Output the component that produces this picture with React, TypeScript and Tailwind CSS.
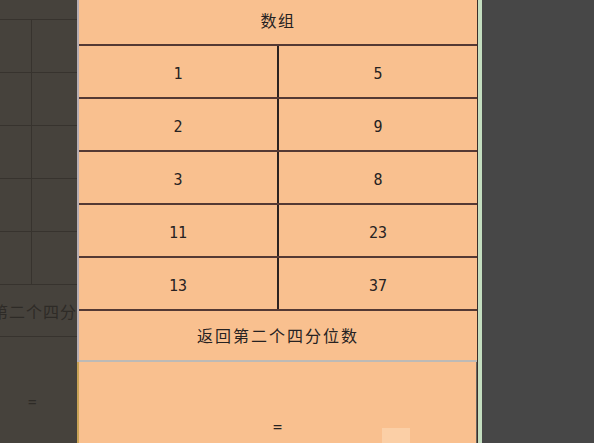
import React from "react";

const cjk = { fontFamily: '"Noto Sans CJK SC", "Noto Sans", sans-serif' };
const mono = { fontFamily: '"DejaVu Sans Mono", "Liberation Mono", monospace' };

const rows = [
  ["1", "5"],
  ["2", "9"],
  ["3", "8"],
  ["11", "23"],
  ["13", "37"],
];

export default function App() {
  return (
    <div className="flex h-[443px] w-[594px] overflow-hidden bg-[#474747]">
      {/* sheet behind, dimmed */}
      <div className="flex w-[77px] shrink-0 flex-col overflow-hidden bg-[#46423c] text-[#2e2b27]">
        <div className="h-[20px] border-b border-[#37332e]" />
        {[0, 1, 2, 3, 4].map((i) => (
          <div key={i} className="flex h-[53px] border-b border-[#37332e]">
            <div className="w-[32px] border-r border-[#37332e]" />
          </div>
        ))}
        <div className="flex h-[52px] items-center border-b border-[#37332e]">
          <span className="ml-[-42px] whitespace-nowrap text-[16px] tracking-[1px]" style={cjk}>
            返回第二个四分位数
          </span>
        </div>
        <div className="flex flex-1 items-center pl-[28px] pt-[24px] text-[14px]" style={mono}>
          =
        </div>
      </div>

      <div className="flex w-[2px] shrink-0 flex-col">
        <div className="h-[362px] bg-[#b6aeb4]" />
        <div className="flex-1 bg-[#c9a356]" />
      </div>

      {/* table */}
      <div className="flex w-[398px] shrink-0 flex-col bg-[#f9c08f] text-[#262222]">
        <div className="flex h-[46px] items-center justify-center border-b-2 border-[#543934] pb-[5px] text-[16px] tracking-[1.5px]" style={cjk}>
          数组
        </div>
        {rows.map(([a, b]) => (
          <div key={a} className="flex h-[53px] border-b-2 border-[#543934] text-[15px]" style={mono}>
            <div className="flex flex-1 items-center justify-center border-r-2 border-[#2c2220] pt-[5px]">{a}</div>
            <div className="flex flex-1 items-center justify-center pt-[5px]">{b}</div>
          </div>
        ))}
        <div className="flex h-[51px] items-center justify-center border-b-2 border-[#bdbab6] pb-[2px] text-[16px] tracking-[2px]" style={cjk}>
          返回第二个四分位数
        </div>
        <div className="relative flex flex-1 items-end justify-center border-r border-[#6a6660] pb-[5px] text-[15px]" style={mono}>
          =
          <div className="absolute bottom-0 left-[303px] h-[15px] w-[28px] bg-[#fbcfa6]" />
        </div>
      </div>

      <div className="w-[1px] shrink-0 bg-[#3a2e2a]" />
      <div className="w-[4px] shrink-0 bg-[#c4dec0]" />
      <div className="flex-1 bg-[#474747]" />
    </div>
  );
}
